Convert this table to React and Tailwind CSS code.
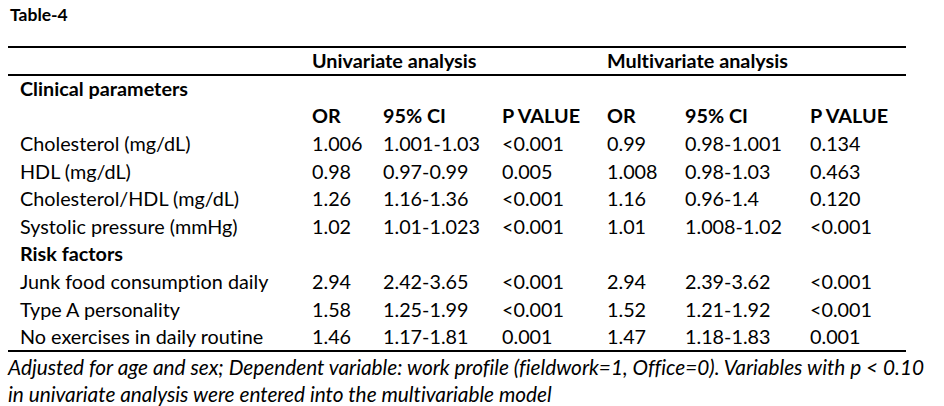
import React from "react";

const rowsClinical = [
  ["Cholesterol (mg/dL)", "1.006", "1.001-1.03", "<0.001", "0.99", "0.98-1.001", "0.134"],
  ["HDL (mg/dL)", "0.98", "0.97-0.99", "0.005", "1.008", "0.98-1.03", "0.463"],
  ["Cholesterol/HDL (mg/dL)", "1.26", "1.16-1.36", "<0.001", "1.16", "0.96-1.4", "0.120"],
  ["Systolic pressure (mmHg)", "1.02", "1.01-1.023", "<0.001", "1.01", "1.008-1.02", "<0.001"],
];

const rowsRisk = [
  ["Junk food consumption daily", "2.94", "2.42-3.65", "<0.001", "2.94", "2.39-3.62", "<0.001"],
  ["Type A personality", "1.58", "1.25-1.99", "<0.001", "1.52", "1.21-1.92", "<0.001"],
  ["No exercises in daily routine", "1.46", "1.17-1.81", "0.001", "1.47", "1.18-1.83", "0.001"],
];

const DataRow = ({ cells, last }) => (
  <tr className={last ? "h-[27.6px] border-b-2 border-black" : "h-[27.6px]"}>
    {cells.map((c, i) => (
      <td key={i} className={i === 0 ? "pl-3 whitespace-nowrap" : "whitespace-nowrap"}>
        {c}
      </td>
    ))}
  </tr>
);

export default function App() {
  return (
    <div className="w-[944px] h-[406px] bg-white text-black font-['Lato',sans-serif] text-[19.8px] leading-none [font-variant-ligatures:none]">
      <div className="pt-[6px] pl-[10px] font-bold text-[17.5px] h-[46px]">Table-4</div>

      <table className="ml-2 w-[898px] table-fixed border-collapse">
        <colgroup>
          <col className="w-[304px]" />
          <col className="w-[71px]" />
          <col className="w-[119px]" />
          <col className="w-[105px]" />
          <col className="w-[78px]" />
          <col className="w-[125px]" />
          <col className="w-[96px]" />
        </colgroup>
        <tbody>
          <tr className="h-[28px] border-t-2 border-b-2 border-black font-bold">
            <td></td>
            <td colSpan={3}>Univariate analysis</td>
            <td colSpan={3}>Multivariate analysis</td>
          </tr>
          <tr className="h-[27.6px] font-bold">
            <td colSpan={7} className="pl-3">Clinical parameters</td>
          </tr>
          <tr className="h-[27.6px] font-bold">
            <td></td>
            <td>OR</td>
            <td>95% CI</td>
            <td>P VALUE</td>
            <td>OR</td>
            <td>95% CI</td>
            <td>P VALUE</td>
          </tr>
          {rowsClinical.map((r) => (
            <DataRow key={r[0]} cells={r} />
          ))}
          <tr className="h-[27.6px] font-bold">
            <td colSpan={7} className="pl-3">Risk factors</td>
          </tr>
          {rowsRisk.map((r, i) => (
            <DataRow key={r[0]} cells={r} last={i === rowsRisk.length - 1} />
          ))}
        </tbody>
      </table>

      <p className="pl-2 pt-[1px] italic text-[20.8px] leading-[27px] whitespace-nowrap">
        Adjusted for age and sex; Dependent variable: work profile (fieldwork=1, Office=0). Variables with p &lt; 0.10
        <br />
        in univariate analysis were entered into the multivariable model
      </p>
    </div>
  );
}
